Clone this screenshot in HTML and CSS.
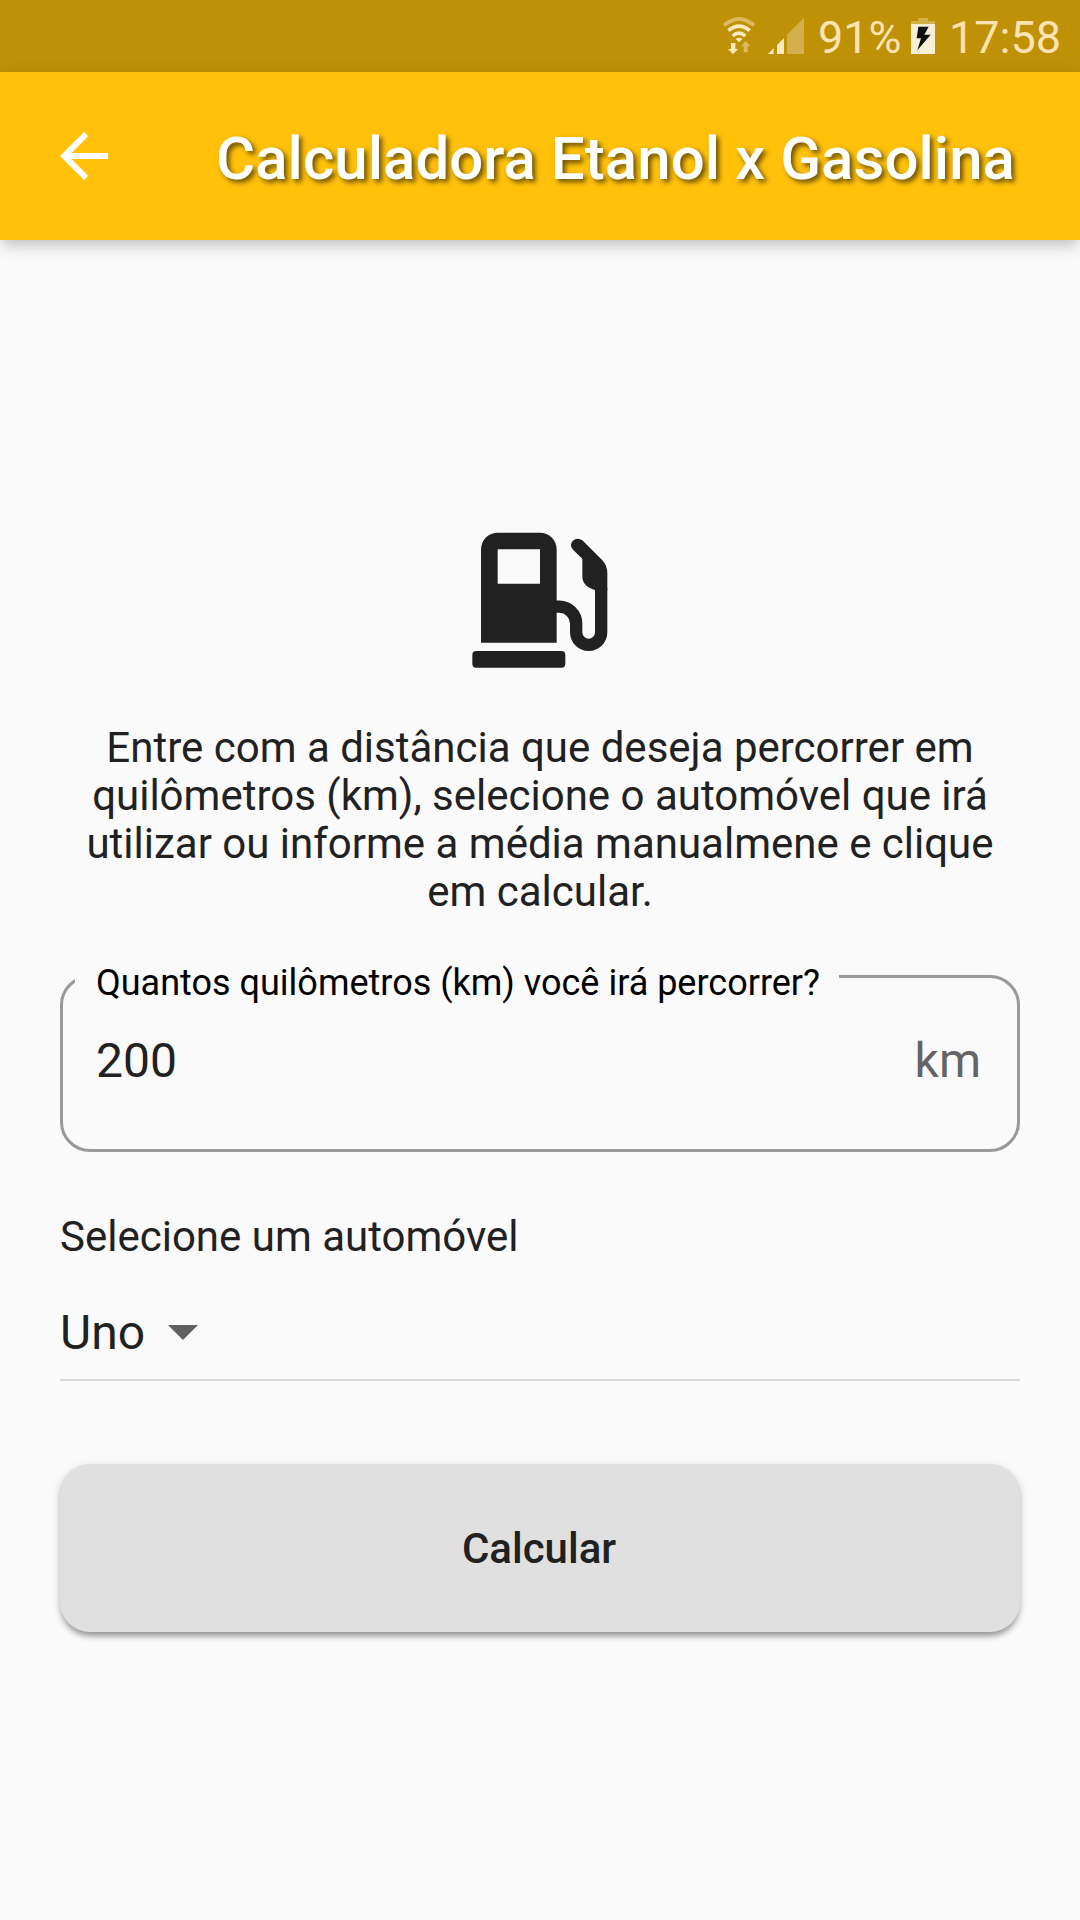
FILE: index.html
```html
<!DOCTYPE html>
<html lang="pt-BR">
<head>
  <meta charset="UTF-8" />
  <meta name="viewport" content="width=device-width, initial-scale=1" />
  <title>Calculadora Etanol x Gasolina</title>
  <link rel="stylesheet" href="styles.css">
</head>
<body>
  <div class="status-bar">
    <svg class="wifi" viewBox="70 48 96 116">
      <g fill="none" stroke="#fdeac0" stroke-width="11">
        <path d="M73 76Q118 38 163 76" stroke="#dcbb60" />
        <path d="M86 92Q118 65 150 92" />
        <path d="M99 108Q118 91 137 108" />
      </g>
      <path d="M108 117Q118 110 128 117L118 127Z M94 129H107V147H115L100 163L85 147H94Z" fill="#fdeac0" />
      <path d="M132 157V139H124L138 123L152 139H144V157Z" fill="#dcbb60" />
    </svg>
    <svg class="signal" viewBox="204 48 108 116">
      <path d="M204 162L221 145V162Z M231 162V135L252 114V162Z" fill="#fdeac0" />
      <path d="M261 162V104L312 53V162Z" fill="#d3b04b" />
    </svg>
    <span class="percent">91%</span>
    <svg class="battery" viewBox="633 48 72 116">
      <path d="M633 72V63H655V54H684V63H705V72Z" fill="#d3b04b" />
      <path d="M633 72H705V162H633Z" fill="#f8efd7" />
      <path d="M655 80H686L673 104H692L652 151L663 115H650Z" fill="#111" />
    </svg>
    <span class="clock">17:58</span>
  </div>

  <header>
    <svg class="back" viewBox="0 0 24 24">
      <path d="M20 11H7.83l5.59-5.59L12 4l-8 8 8 8 1.41-1.41L7.83 13H20v-2z" fill="#fff" />
    </svg>
    <h1>Calculadora Etanol x Gasolina</h1>
  </header>

  <main>
    <svg class="pump" viewBox="0 0 540 540">
      <path fill-rule="evenodd" d="M93 398V118a50 50 0 0 1 50-50H270a50 50 0 0 1 50 50V398Z M143 118V221H270V118Z" />
      <rect x="67" y="423" width="279" height="50" rx="12" />
      <path d="M397 146L369 119Q357 106 368 93Q382 80 397 91L457 151Q472 167 472 190V240H435Q397 230 397 198Z" />
      <path class="hose" d="M318 290H328A50.5 50.5 0 0 1 378.5 340V367A37.5 37.5 0 0 0 453.5 367V235" />
    </svg>

    <p class="intro">Entre com a distância que deseja percorrer em quilômetros (km), selecione o automóvel que irá utilizar ou informe a média manualmene e clique em calcular.</p>

    <div class="field">
      <label for="distance">Quantos quilômetros (km) você irá percorrer?</label>
      <input id="distance" type="text" value="200" />
      <span class="suffix">km</span>
    </div>

    <p class="caption">Selecione um automóvel</p>
    <div class="dropdown">
      <span>Uno</span>
      <i class="caret"></i>
    </div>

    <button type="button">Calcular</button>
  </main>
</body>
</html>
```
FILE: styles.css
```css
* {
  box-sizing: border-box;
}

body {
  font-family: Roboto, "Liberation Sans", sans-serif;
  background-color: #fafafa;
  margin: 0;
  height: 1920px;
  color: #212121;
  overflow: hidden;
}

svg {
  display: block;
  flex: none;
}

.status-bar {
  display: flex;
  height: 72px;
  padding-left: 723px;
  background-color: #bf9106;
  color: #fde2b3;
  font-size: 45px;
  line-height: 75px;
  white-space: nowrap;
}

.status-bar svg {
  height: 38.67px;
  margin-top: 16px;
}

.wifi {
  width: 32px;
}

.signal {
  width: 36px;
  margin-left: 13px;
}

.percent {
  width: 93px;
  margin-left: 14px;
}

.battery {
  width: 24px;
}

.clock {
  margin-left: 14px;
}

header {
  position: relative;
  display: flex;
  align-items: center;
  height: 168px;
  padding-left: 48px;
  background-color: #ffc10a;
  box-shadow: 0 6px 12px -3px rgba(0,0,0,0.16), 0 12px 15px rgba(0,0,0,0.04), 0 3px 18px rgba(0,0,0,0.07);
}

.back {
  width: 72px;
  height: 72px;
}

h1 {
  margin: 4px 0 0 96px;
  font-size: 60px;
  font-weight: 500;
  letter-spacing: 0.04px;
  color: white;
  white-space: nowrap;
  text-shadow: 3px 3px 5px rgba(0,0,0,0.6);
}

main {
  padding: 270px 60px 0;
}

.pump {
  width: 180px;
  height: 180px;
  margin: 0 auto;
  fill: #212121;
}

.hose {
  fill: none;
  stroke: #212121;
  stroke-width: 37;
}

.intro {
  margin: 34px 0 0;
  font-size: 42px;
  line-height: 48px;
  text-align: center;
}

.field {
  position: relative;
  display: flex;
  align-items: center;
  height: 177px;
  margin-top: 59px;
  padding: 0 36px 6px 33px;
  border: 3px solid #999;
  border-radius: 30px;
}

.field label {
  position: absolute;
  left: 12px;
  top: -16px;
  width: 764px;
  padding-left: 21px;
  background-color: #fafafa;
  color: black;
  font-size: 36px;
  line-height: 42px;
  white-space: nowrap;
}

.field input {
  flex: 1;
  min-width: 0;
  padding: 0;
  border: none;
  outline: none;
  background: none;
  color: #212121;
  font-family: inherit;
  font-size: 48px;
}

.suffix {
  color: #646464;
  font-size: 48px;
}

.caption {
  margin: 61px 0 0;
  font-size: 42px;
  line-height: 48px;
}

.dropdown {
  display: flex;
  align-items: center;
  height: 96px;
  margin-top: 24px;
  border-bottom: 2px solid #d9d9d9;
  font-size: 48px;
}

.caret {
  margin: 1px 0 0 23px;
  border: 15px solid transparent;
  border-top-color: #616161;
  border-bottom: none;
}

button {
  display: block;
  width: 100%;
  height: 168px;
  margin-top: 83px;
  padding: 0 2px 0 0;
  border: none;
  border-radius: 30px;
  background-color: #e0e0e0;
  box-shadow: 0 6px 6px -3px rgba(0,0,0,0.28), 0 4px 6px rgba(0,0,0,0.16), 0 2px 12px rgba(0,0,0,0.08);
  color: #212121;
  font-family: inherit;
  font-size: 42px;
  font-weight: 500;
}
```
